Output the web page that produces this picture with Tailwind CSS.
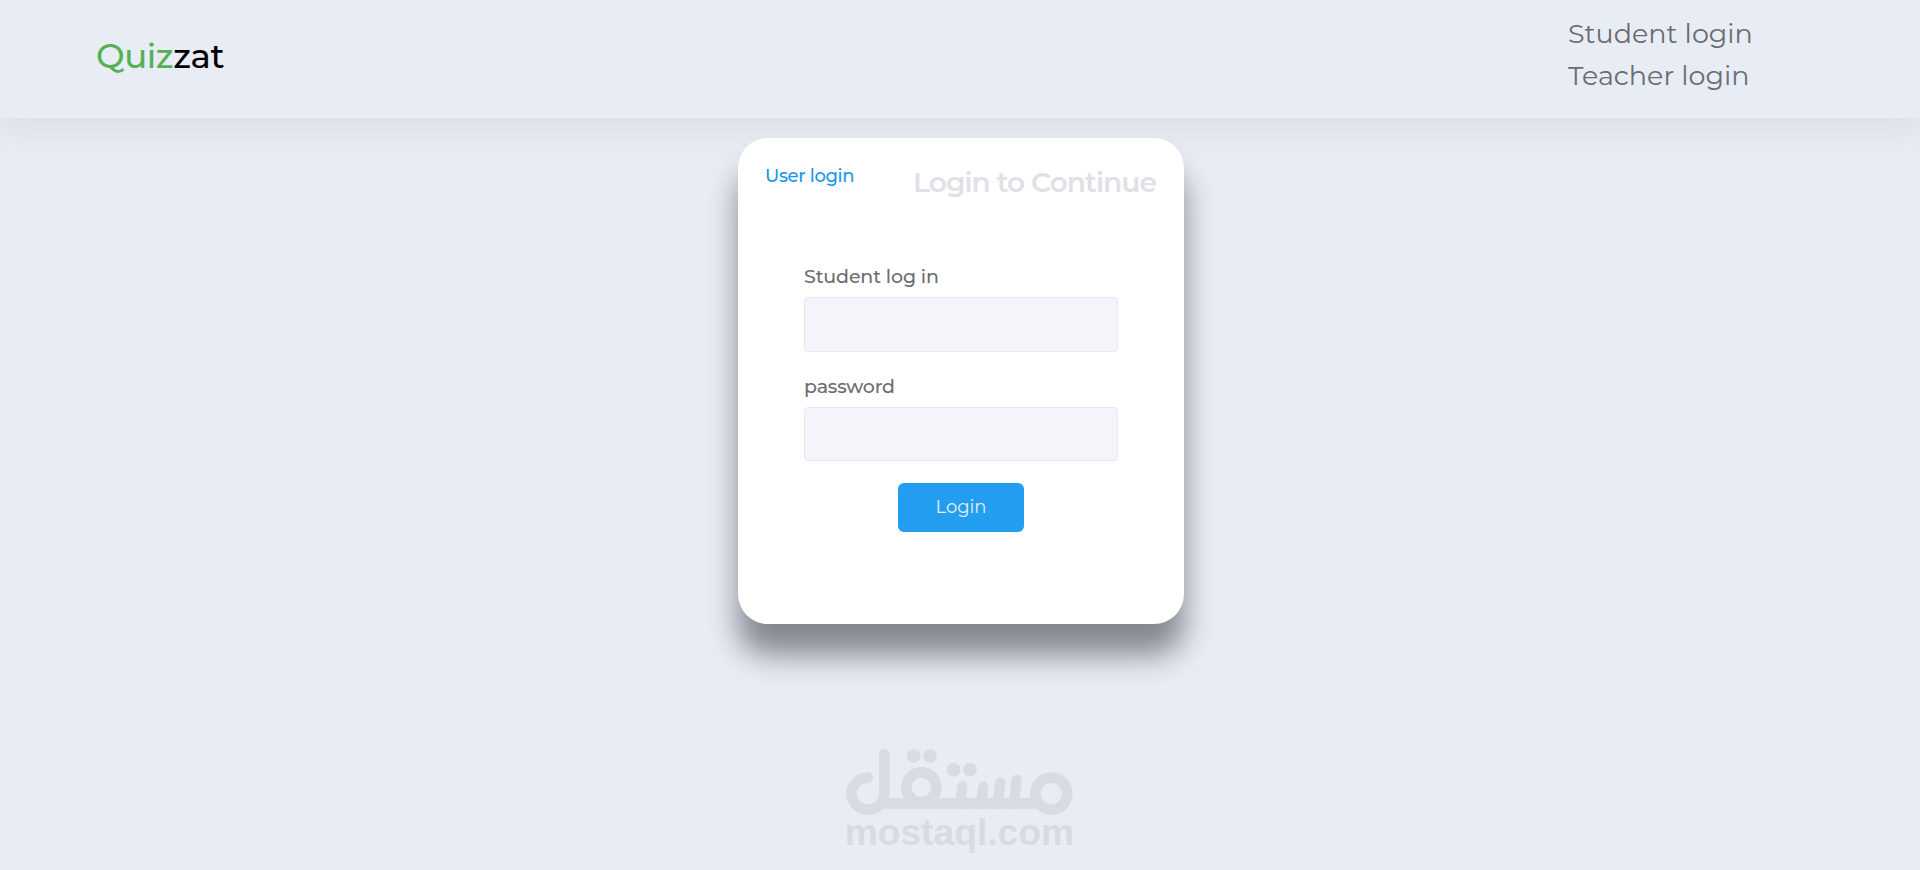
<!DOCTYPE html>
<html lang="en">
<head>
    <meta charset="UTF-8">
    <meta name="viewport" content="width=device-width, initial-scale=1.0">
    <title>Quizzat - Login</title>
    <script src="https://cdn.jsdelivr.net/npm/@tailwindcss/browser@4"></script>
</head>
<body class="bg-[#e8edf5] font-[Montserrat,Inter,sans-serif] h-screen overflow-hidden flex flex-col">
    <!-- Navbar -->
    <header class="h-[118px] shrink-0 flex justify-between pl-24 pr-[168px] shadow-[0_10px_34px_rgba(100,80,30,0.1)]">
        <a href="#" class="mt-[35px] text-[34px] leading-[42px] font-medium tracking-[-0.4px] text-black"><span class="text-[#54b054]">Quiz</span>zat</a>
        <nav class="w-[184px] mt-[13px] flex flex-col text-[27px] leading-[42px] font-normal text-[#6c6c70] whitespace-nowrap">
            <a href="#">Student login</a>
            <a href="#">Teacher login</a>
        </nav>
    </header>

    <!-- Login card -->
    <main class="w-[446px] h-[486px] shrink-0 mt-5 ml-[738px] bg-white rounded-[30px] shadow-[0_31px_30px_rgba(2,2,6,0.43)]">
        <div class="flex justify-between pl-[27px] pr-7 pt-6">
            <a href="#" class="mt-0.5 text-lg leading-6 font-medium tracking-[-0.35px] text-[#2196f0] whitespace-nowrap">User login</a>
            <h1 class="text-[28px] leading-10 font-semibold tracking-[-0.93px] text-[#dee1e6] whitespace-nowrap">Login to Continue</h1>
        </div>
        <form id="loginForm" class="flex flex-col px-[66px] pt-[63px]">
            <label for="username" class="h-8 text-[19px] leading-6 font-medium tracking-[-0.15px] text-[#6c6c70]">Student log in</label>
            <input type="text" id="username" class="h-[55px] px-3 rounded border border-[#e8eaf1] bg-[#f4f4fa]">
            <label for="password" class="mt-[23px] h-8 text-[19px] leading-6 font-medium tracking-[-0.2px] text-[#6c6c70]">password</label>
            <input type="password" id="password" class="h-[54px] px-3 rounded border border-[#e5eaf2] bg-[#f4f4fa]">
            <button type="submit" class="self-center mt-[22px] w-[126px] h-[49px] pb-0.5 rounded-md bg-[#229df0] text-lg text-[#e8edf5]">Login</button>
        </form>
    </main>

    <!-- Watermark -->
    <svg class="w-[280px] h-[140px] shrink-0 mt-[106px] ml-[820px]" viewBox="0 0 840 420" fill="none" stroke="#d8dbe0" stroke-width="32" stroke-linecap="round">
        <path d="M143 143A49 48 0 1 0 193 191V73"/>
        <path d="M182 220H650" stroke-linecap="butt"/>
        <circle cx="304" cy="172" r="45"/>
        <path d="M427 169L421 220M490 170L483 220M541 158L533 220M590 150L582 220" stroke-width="31"/>
        <circle cx="694" cy="191" r="48"/>
        <g fill="#d8dbe0" stroke="none">
            <circle cx="281" cy="78" r="20.5"/>
            <circle cx="330" cy="78" r="20.5"/>
            <circle cx="401" cy="119" r="20.5"/>
            <circle cx="450" cy="119" r="20.5"/>
            <text x="74" y="346" textLength="688" lengthAdjust="spacingAndGlyphs" font-family="Liberation Sans, Arial, sans-serif" font-weight="700" font-size="108">mostaql.com</text>
        </g>
    </svg>
</body>
</html>
